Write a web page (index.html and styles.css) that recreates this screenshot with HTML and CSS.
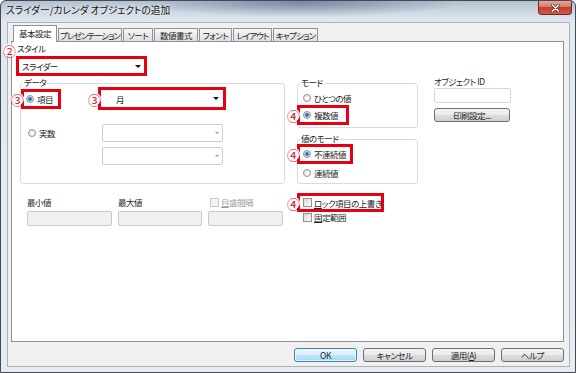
FILE: index.html
```html
<!DOCTYPE html>
<html lang="ja">
<head>
    <meta charset="UTF-8">
    <title>スライダー/カレンダ オブジェクトの追加</title>
    <link rel="stylesheet" href="styles.css">
</head>
<body>
    <div class="window">
        <div class="titlebar">
            <span class="title">スライダー/カレンダ オブジェクトの追加</span>
            <div class="close-btn">
                <svg width="9" height="8" viewBox="0 0 9 8">
                    <path d="M1.5 1 L7.5 7 M7.5 1 L1.5 7" stroke="#5a1a12" stroke-width="2.6" stroke-linecap="round"/>
                    <path d="M1.5 1 L7.5 7 M7.5 1 L1.5 7" stroke="#fff" stroke-width="1.6" stroke-linecap="round"/>
                </svg>
            </div>
        </div>

        <div class="client">
            <div class="tabs">
                <div class="tab active">基本設定</div>
                <div class="tab">プレゼンテーション</div>
                <div class="tab">ソート</div>
                <div class="tab">数値書式</div>
                <div class="tab">フォント</div>
                <div class="tab">レイアウト</div>
                <div class="tab">キャプション</div>
            </div>

            <div class="panel">
                <div class="style-block">
                    <div class="style-label"><span class="badge">②</span>スタイル</div>
                    <div class="select mark style-select">
                        <span>スライダー</span><span class="arrow"></span>
                    </div>
                </div>

                <div class="main-row">
                    <!-- データ -->
                    <div class="group data-group">
                        <div class="group-title">データ</div>
                        <div class="data-row">
                            <div class="data-cell">
                                <div class="mark item-mark">
                                    <span class="badge">③</span>
                                    <div class="option"><span class="radio checked"></span>項目</div>
                                </div>
                            </div>
                            <div class="select mark month-select">
                                <span class="badge">③</span>
                                <span>月</span><span class="arrow"></span>
                            </div>
                        </div>
                        <div class="data-row row-value">
                            <div class="data-cell">
                                <div class="option real-option"><span class="radio"></span>実数</div>
                            </div>
                            <div class="combo"><span class="arrow grey"></span></div>
                        </div>
                        <div class="data-row row-extra">
                            <div class="data-cell"></div>
                            <div class="combo"><span class="arrow grey"></span></div>
                        </div>
                    </div>

                    <!-- モード -->
                    <div class="mode-col">
                        <div class="group mode-group">
                            <div class="group-title">モード</div>
                            <div class="option first-option"><span class="radio"></span>ひとつの値</div>
                            <div class="mark multi-mark">
                                <span class="badge">④</span>
                                <div class="option"><span class="radio checked"></span>複数値</div>
                            </div>
                        </div>
                        <div class="group value-mode-group">
                            <div class="group-title">値のモード</div>
                            <div class="mark discrete-mark">
                                <span class="badge">④</span>
                                <div class="option"><span class="radio checked"></span>不連続値</div>
                            </div>
                            <div class="option last-option"><span class="radio"></span>連続値</div>
                        </div>
                    </div>

                    <!-- オブジェクト ID -->
                    <div class="object-col">
                        <div>オブジェクト ID</div>
                        <div class="textbox"></div>
                        <div class="btn print-btn">印刷設定...</div>
                    </div>
                </div>

                <div class="bottom-row">
                    <div class="range-fields">
                        <div class="range-field">
                            <div>最小値</div>
                            <div class="textbox disabled"></div>
                        </div>
                        <div class="range-field">
                            <div>最大値</div>
                            <div class="textbox disabled"></div>
                        </div>
                        <div class="range-field">
                            <div class="option step-option"><span class="check disabled"></span><span class="muted"><u>目</u>盛間隔</span></div>
                            <div class="textbox disabled"></div>
                        </div>
                    </div>
                    <div class="lock-col">
                        <div class="mark lock-mark">
                            <span class="badge">④</span>
                            <div class="option"><span class="check"></span><span><u>ロ</u>ック項目の上書き</span></div>
                        </div>
                        <div class="option fixed-option"><span class="check"></span><span><u>固</u>定範囲</span></div>
                    </div>
                </div>
            </div>

            <div class="buttons">
                <div class="btn default">OK</div>
                <div class="btn">キャンセル</div>
                <div class="btn">適用(<u>A</u>)</div>
                <div class="btn">ヘルプ</div>
            </div>
        </div>
    </div>
</body>
</html>
```

FILE: styles.css
```css
body {
    margin: 0;
    font-family: "Noto Sans CJK JP", "Noto Sans", sans-serif;
    font-size: 8.5px;
    line-height: 10px;
    letter-spacing: -0.5px;
    color: #1e1e1e;
    font-feature-settings: "palt";
    background: #fff;
}
u {
    text-decoration-thickness: 1px;
    text-underline-offset: 1px;
}
.window {
    width: 576px;
    height: 373px;
    box-sizing: border-box;
    border: 1px solid #444a52;
    border-radius: 6px 6px 0 0;
    background:
        radial-gradient(ellipse 160px 14px at 300px 2px, rgba(70, 92, 125, 0.55), rgba(70, 92, 125, 0)),
        linear-gradient(180deg, #b3c1d0 0, #cdd7e2 10px, #e2e8ef 21px, #e7ecf1 100%);
    display: flex;
    flex-direction: column;
    overflow: hidden;
}
.titlebar {
    height: 21px;
    display: flex;
    justify-content: space-between;
    align-items: flex-start;
    padding-left: 5px;
}
.title {
    margin-top: 4px;
    font-size: 9.7px;
    line-height: 11px;
    letter-spacing: 0;
    color: #151515;
    text-shadow: 0 0 4px rgba(255, 255, 255, 0.9);
}
.close-btn {
    width: 34px;
    height: 14px;
    box-sizing: border-box;
    margin-right: 3px;
    border: 1px solid #6b2b22;
    border-top: none;
    border-radius: 0 0 4px 4px;
    background: linear-gradient(180deg, #e5a89c 0, #d77a69 45%, #c0402c 50%, #cf5a45 100%);
    display: flex;
    align-items: center;
    justify-content: center;
}

.client {
    flex: 1;
    margin: 0 5px 5px 6px;
    border: 1px solid #a9b1bb;
    background: #f0f0f0;
    padding: 2px 5px 0 3px;
    display: flex;
    flex-direction: column;
}
.tabs {
    display: flex;
    align-items: flex-end;
    gap: 1px;
    height: 16px;
    padding-left: 2px;
    position: relative;
    z-index: 1;
}
.tab {
    height: 12px;
    box-sizing: content-box;
    line-height: 12px;
    border: 1px solid #8d9199;
    border-bottom: none;
    background: linear-gradient(180deg, #f6f6f6, #dfdfdf);
    text-align: center;
    white-space: nowrap;
}
.tab:nth-child(1) { width: 42px; }
.tab:nth-child(2) { width: 62px; letter-spacing: -1px; }
.tab:nth-child(3) { width: 28px; }
.tab:nth-child(4) { width: 42px; }
.tab:nth-child(5) { width: 31px; }
.tab:nth-child(6) { width: 37px; letter-spacing: -1px; }
.tab:nth-child(7) { width: 43px; letter-spacing: -0.8px; }
.tab.active {
    height: 16px;
    line-height: 15px;
    margin-bottom: -1px;
    background: #fff;
}
.panel {
    height: 301px;
    box-sizing: border-box;
    border: 1px solid #8d9199;
    background: #fff;
}

/* red annotation boxes */
.mark {
    position: relative;
    box-sizing: border-box;
    border: 3px solid #e60012;
    background: #fff;
}
.badge {
    position: absolute;
    right: 100%;
    margin-right: 0;
    top: 50%;
    transform: translateY(-50%);
    font-size: 13px;
    line-height: 13px;
    letter-spacing: 0;
    color: #e60012;
    background: #fff;
    border-radius: 50%;
}

.style-block {
    padding: 1px 0 0 5px;
}
.style-label {
    position: relative;
    width: fit-content;
}
.style-label .badge {
    margin-right: 1px;
    margin-top: 2px;
}
.select {
    display: flex;
    align-items: center;
    justify-content: space-between;
}
.style-select {
    width: 131px;
    height: 20px;
    margin: 3px 0 0 -1px;
    padding: 0 3px 0 3px;
}
.arrow {
    width: 0;
    height: 0;
    border-top: 3px solid #111;
    border-left: 3px solid transparent;
    border-right: 3px solid transparent;
}
.arrow.grey {
    border-top-color: #9a9a9a;
    border-top-width: 2px;
    border-left-width: 2.5px;
    border-right-width: 2.5px;
}

.main-row {
    display: flex;
    align-items: flex-start;
    margin-top: 7px;
    padding-left: 8px;
}
.group {
    box-sizing: border-box;
    border: 1px solid #d5dde3;
    border-radius: 3px;
}
.group-title {
    display: table;
    margin: -7px 0 0 2px;
    padding: 0 1px;
    background: #fff;
}
.option {
    display: flex;
    align-items: center;
    gap: 3px;
    white-space: nowrap;
}
.radio {
    width: 8px;
    height: 8px;
    box-sizing: border-box;
    border-radius: 50%;
    border: 1px solid #8e9194;
    background: radial-gradient(circle at 60% 60%, #fff 0, #dcdcdc 100%);
}
.radio.checked {
    background: radial-gradient(circle, #1d5c9c 0, #3a80c2 1.4px, #b7d2ec 2.4px, #f2f2f2 3px);
}
.check {
    width: 9px;
    height: 9px;
    box-sizing: border-box;
    border: 1px solid #8e9194;
    background: linear-gradient(135deg, #d9d9d9, #fbfbfb);
}
.check.disabled {
    border-color: #c6c6c6;
    background: #f4f4f4;
}
.muted {
    color: #9d9d9d;
}

.data-group {
    width: 265px;
    height: 101px;
}
.data-row {
    display: flex;
    align-items: center;
}
.data-row:first-of-type {
    align-items: flex-start;
}
.data-cell {
    flex: 0 0 77px;
}
.item-mark {
    width: 40px;
    height: 20px;
    padding-left: 2px;
    display: flex;
    align-items: center;
}
.month-select {
    width: 128px;
    height: 23px;
    padding: 0 4px 0 15px;
}
.row-value {
    margin-top: 14px;
}
.row-extra {
    margin-top: 5px;
}
.real-option {
    margin-left: 7px;
}
.combo {
    width: 121px;
    height: 18px;
    box-sizing: border-box;
    margin-left: 4px;
    border: 1px solid #cdcdcd;
    border-radius: 2px;
    background: #fff;
    display: flex;
    align-items: center;
    justify-content: flex-end;
    padding-right: 3px;
}

.mode-col {
    width: 121px;
    margin-left: 12px;
}
.mode-group {
    height: 45px;
}
.first-option {
    margin: 6px 0 0 5px;
}
.multi-mark {
    width: 52px;
    height: 20px;
    margin: 2px 0 0 -1px;
    padding-left: 3px;
    display: flex;
    align-items: center;
}
.value-mode-group {
    height: 45px;
    margin-top: 11px;
}
.discrete-mark {
    width: 56px;
    height: 20px;
    margin: 1px 0 0 -1px;
    padding-left: 3px;
    display: flex;
    align-items: center;
}
.last-option {
    margin: 4px 0 0 5px;
}

.object-col {
    width: 77px;
    margin: -7px 0 0 16px;
}
.textbox {
    height: 15px;
    box-sizing: border-box;
    border: 1px solid #d6d6d6;
    border-radius: 2px;
    background: #fff;
}
.object-col .textbox {
    margin-top: 2px;
}
.textbox.disabled {
    border-color: #c9c9c9;
    background: #f0f0f0;
}
.btn {
    height: 14px;
    box-sizing: border-box;
    border: 1px solid #707070;
    border-radius: 3px;
    background: linear-gradient(180deg, #f3f3f3 0, #ebebeb 48%, #dddddd 52%, #cfcfcf 100%);
    text-align: center;
    line-height: 12px;
    white-space: nowrap;
}
.print-btn {
    width: 76px;
    margin-top: 5px;
}

.bottom-row {
    display: flex;
    align-items: flex-start;
    margin-top: 9px;
}
.range-fields {
    display: grid;
    grid-template-columns: 85px 84px 75px;
    column-gap: 6px;
    margin: 4px 0 0 15px;
}
.range-field {
    display: flex;
    flex-direction: column;
    gap: 4px;
}
.step-option {
    margin-left: 2px;
    gap: 2px;
}
.lock-col {
    margin-left: 14px;
}
.lock-mark {
    width: 87px;
    height: 19px;
    padding-left: 3px;
    display: flex;
    align-items: center;
}
.lock-mark .option,
.fixed-option {
    gap: 2px;
}
.fixed-option {
    margin-left: 6px;
}

.buttons {
    display: flex;
    justify-content: flex-end;
    gap: 6px;
    margin-top: 6px;
}
.buttons .btn {
    width: 63px;
}
.btn.default {
    border-color: #3c7fb1;
    background: linear-gradient(180deg, #eaf6fd 0, #d9f0fc 48%, #bee6fd 52%, #a7d9f5 100%);
    box-shadow: inset 0 0 0 1px rgba(255, 255, 255, 0.7);
}
```
